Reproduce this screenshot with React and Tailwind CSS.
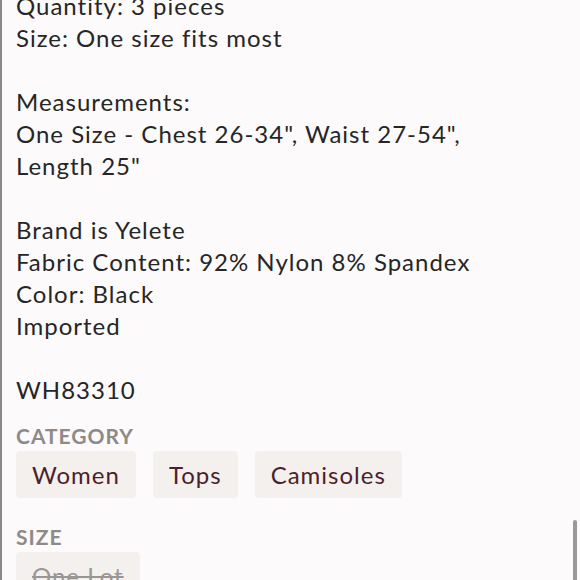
export default function App() {
  const font = { fontFamily: 'Lato, "Open Sans", sans-serif' };
  return (
    <div className="w-[580px] h-[580px] overflow-hidden bg-[#fcfafa] relative border-l-2 border-[#8a8a8a]" style={font}>
      <div className="pl-[14px] mt-[-10px] text-[24px] leading-[32px] tracking-[1px] text-[#262626]">
        <div>Quantity: 3 pieces</div>
        <div>Size: One size fits most</div>
        <div className="h-[32px]"></div>
        <div>Measurements:</div>
        <div>One Size - Chest 26-34", Waist 27-54",</div>
        <div>Length 25"</div>
        <div className="h-[32px]"></div>
        <div>Brand is Yelete</div>
        <div>Fabric Content: 92% Nylon 8% Spandex</div>
        <div>Color: Black</div>
        <div>Imported</div>
        <div className="h-[32px]"></div>
        <div>WH83310</div>
      </div>
      <div className="pl-[14px] mt-[18px]">
        <div className="text-[21px] leading-[24px] font-bold tracking-[1px] text-[#8e8a88]">CATEGORY</div>
        <div className="flex gap-[17px] mt-[3px]">
          {["Women", "Tops", "Camisoles"].map((t) => (
            <div key={t} className="h-[47px] px-[16px] flex items-center rounded-[4px] bg-[#f3f0ee] text-[24px] tracking-[1px] text-[#4e1f2a]">{t}</div>
          ))}
        </div>
        <div className="text-[21px] leading-[24px] font-bold tracking-[1px] text-[#8e8a88] mt-[27px]">SIZE</div>
        <div className="flex mt-[3px]">
          <div className="h-[47px] px-[16px] flex items-center rounded-[4px] bg-[#f3f0ee] text-[24px] tracking-[1px] text-[#9a9694] line-through">One Lot</div>
        </div>
      </div>
      <div className="absolute left-[571px] top-[520px] w-[4px] h-[70px] rounded-full bg-[#999]"></div>
    </div>
  );
}
